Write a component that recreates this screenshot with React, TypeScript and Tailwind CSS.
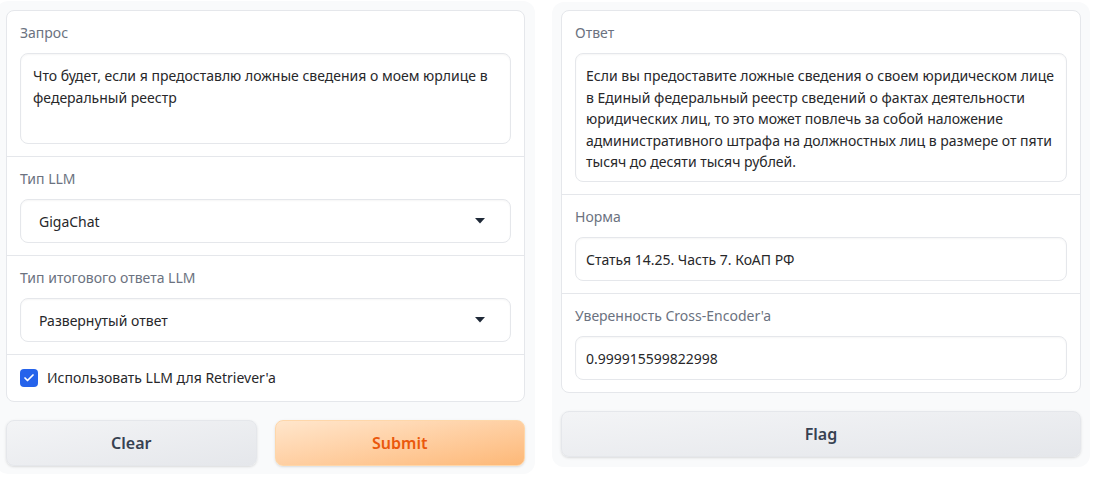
import { Check } from 'lucide-react'

const font = { fontFamily: '"Noto Sans", "Open Sans", sans-serif' }

function Label({ children }: { children: React.ReactNode }) {
  return <div className="mb-2.5 h-5 text-[14px] leading-5 text-[#6b7280]">{children}</div>
}

function Dropdown({ value }: { value: string }) {
  return (
    <div className="flex h-11 items-center justify-between rounded-lg border border-[#e5e7eb] bg-white pl-[18px] pr-[25px] text-[14px] text-[#27272a] shadow-[inset_0_1px_2px_rgba(0,0,0,0.04)]">
      <span>{value}</span>
      <svg width="10" height="6" viewBox="0 0 10 6" className="text-[#1f2937]">
        <path d="M0 0h10L5 5.5z" fill="currentColor" />
      </svg>
    </div>
  )
}

function Field({ value }: { value: string }) {
  return (
    <div className="flex h-11 items-center rounded-lg border border-[#e5e7eb] bg-white px-[10px] text-[14px] text-[#27272a] shadow-[inset_0_1px_2px_rgba(0,0,0,0.04)]">
      {value}
    </div>
  )
}

export default function App() {
  return (
    <div className="flex h-[477px] w-[1096px] gap-[17px] bg-white pt-px" style={font}>
      <div className="-ml-1 flex h-[473px] w-[539px] flex-col gap-[18px] rounded-xl bg-[#f9fafb] pb-[9px] pl-[10px] pr-[10px] pt-[9px]">
        <div className="flex flex-col rounded-lg border border-[#e5e7eb] bg-white">
          <div className="px-[13px] py-3">
            <Label>Запрос</Label>
            <div className="h-[91px] rounded-lg border border-[#e5e7eb] bg-white px-3 py-[11px] text-[14px] leading-[22px] text-[#27272a] shadow-[inset_0_1px_2px_rgba(0,0,0,0.04)]">
              Что будет, если я предоставлю ложные сведения о моем юрлице в федеральный реестр
            </div>
          </div>
          <div className="border-t border-[#e5e7eb] px-[13px] py-3">
            <Label>Тип LLM</Label>
            <Dropdown value="GigaChat" />
          </div>
          <div className="border-t border-[#e5e7eb] px-[13px] py-3">
            <Label>Тип итогового ответа LLM</Label>
            <Dropdown value="Развернутый ответ" />
          </div>
          <div className="flex items-center gap-[9px] border-t border-[#e5e7eb] px-[13px] py-3">
            <div className="flex h-[18px] w-[18px] items-center justify-center rounded bg-[#2563eb]">
              <Check size={12} strokeWidth={3.5} className="text-white" />
            </div>
            <span className="text-[14px] leading-[22px] text-[#27272a]">Использовать LLM для Retriever'a</span>
          </div>
        </div>
        <div className="flex gap-[18px]">
          <button className="h-[46px] flex-1 rounded-lg border border-[#e5e7eb] bg-gradient-to-br from-[#f3f4f6] to-[#e5e7eb] text-[16px] font-semibold text-[#374151] shadow-sm">
            Clear
          </button>
          <button className="h-[46px] flex-1 rounded-lg border border-[#fed7aa] bg-gradient-to-br from-[#ffe6cc] to-[#fdb877] text-[16px] font-semibold text-[#ea580c] shadow-sm">
            Submit
          </button>
        </div>
      </div>

      <div className="mt-px flex h-[465px] w-[538px] flex-col gap-[18px] self-start rounded-xl bg-[#f9fafb] px-[9px] pb-[9px] pt-[8px]">
        <div className="flex flex-col rounded-lg border border-[#e5e7eb] bg-white">
          <div className="px-[13px] py-3">
            <Label>Ответ</Label>
            <div className="h-[129px] rounded-lg border border-[#e5e7eb] bg-white px-[10px] py-[11px] text-[14px] leading-[21.5px] text-[#27272a] shadow-[inset_0_1px_2px_rgba(0,0,0,0.04)]">
              Если вы предоставите ложные сведения о своем юридическом лице в Единый федеральный реестр сведений о фактах деятельности юридических лиц, то это может повлечь за собой наложение административного штрафа на должностных лиц в размере от пяти тысяч до десяти тысяч рублей.
            </div>
          </div>
          <div className="border-t border-[#e5e7eb] px-[13px] py-3">
            <Label>Норма</Label>
            <Field value="Статья 14.25. Часть 7. КоАП РФ" />
          </div>
          <div className="border-t border-[#e5e7eb] px-[13px] py-3">
            <Label>Уверенность Cross-Encoder'a</Label>
            <Field value="0.999915599822998" />
          </div>
        </div>
        <button className="h-[46px] w-full rounded-lg border border-[#e5e7eb] bg-gradient-to-br from-[#f3f4f6] to-[#e5e7eb] text-[16px] font-semibold text-[#374151] shadow-sm">
          Flag
        </button>
      </div>
    </div>
  )
}
